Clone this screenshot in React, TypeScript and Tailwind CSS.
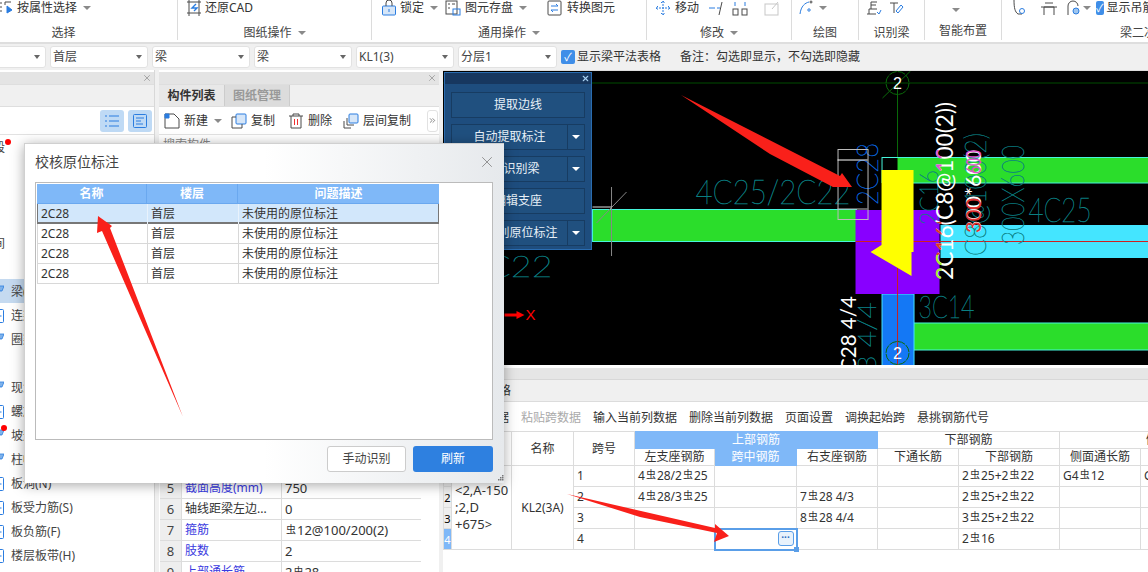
import type { ReactNode } from "react";
import { ChevronsRight, X } from "lucide-react";

const Caret = ({ className = "" }: { className?: string }) => (
  <span className={`inline-block w-0 h-0 border-x-[4px] border-x-transparent border-t-[4px] border-t-[#8a8a8a] ${className}`} />
);

const Glyph = ({ children, className = "" }: { children: ReactNode; className?: string }) => (
  <svg viewBox="0 0 16 16" className={`w-4 h-4 shrink-0 ${className}`} fill="none" stroke="#4a4a4a" strokeWidth="1">
    {children}
  </svg>
);

// 钢筋符号
const Bar = () => <span className="text-[10px] relative -top-[2px] mx-[1px]">虫</span>;

function RibbonGroup({ width, label, caret, children, labelClass = "" }: { width: string; label: string; caret?: boolean; children?: ReactNode; labelClass?: string }) {
  return (
    <div className={`${width} shrink-0 h-[40px] flex flex-col border-r border-[#dcdcdc]`}>
      <div className="h-[15px] flex items-center whitespace-nowrap leading-[15px]">{children}</div>
      <div className={`mt-[9px] flex items-center justify-center gap-[6px] text-[#444] ${labelClass}`}>
        <span>{label}</span>
        {caret && <Caret />}
      </div>
    </div>
  );
}

function Ribbon() {
  return (
    <div className="h-[44px] bg-white border-b-2 border-[#dedede] flex overflow-hidden text-[12px] text-[#333]">
      <RibbonGroup width="w-[178px]" label="选择" labelClass="pr-[50px]">
        <Glyph className="-ml-[2px]"><path d="M1 3h3M1 7h3M1 11h3" /><path d="M7 2h6M7 2v3" /><path d="M9 6v7l5-3z" fill="#2b7de0" stroke="#2b7de0" /></Glyph>
        <span className="ml-[3px]">按属性选择</span>
        <Caret className="ml-[6px]" />
      </RibbonGroup>
      <RibbonGroup width="w-[194px]" label="图纸操作" caret>
        <Glyph className="ml-[8px]"><path d="M1 2h14M1 13h14M3 0v16M13 0v16" /><path d="M10 4 6 8h5l-3 3" stroke="#2b7de0" strokeWidth="1.4" /></Glyph>
        <span className="ml-[3px]">还原CAD</span>
      </RibbonGroup>
      <RibbonGroup width="w-[275px]" label="通用操作" caret>
        <Glyph className="ml-[9px]"><rect x="1.5" y="6" width="13" height="9" rx="1" fill="#d6e6f8" stroke="#2b7de0" /><path d="M5 6V3a3 3 0 0 1 6 0v3" /><path d="M8 9v3" stroke="#2b7de0" /></Glyph>
        <span className="ml-[3px]">锁定</span>
        <Caret className="ml-[6px]" />
        <Glyph className="ml-[7px]"><rect x="1" y="1" width="11" height="13" /><path d="M3 4h2M7 4h3M3 8h2" /><rect x="8" y="9" width="7" height="6" stroke="#2b7de0" /></Glyph>
        <span className="ml-[4px]">图元存盘</span>
        <Caret className="ml-[6px]" />
        <Glyph className="ml-[20px]"><rect x="1" y="1" width="13" height="14" rx="1" /><path d="M4 6h7M11 6 9 4M11 10H4M4 10l2 2" stroke="#2b7de0" /></Glyph>
        <span className="ml-[4px]">转换图元</span>
      </RibbonGroup>
      <RibbonGroup width="w-[145px]" label="修改" caret>
        <Glyph className="ml-[8px]"><path d="M8 1v14M1 8h14M6 3l2-2 2 2M6 13l2 2 2-2M3 6 1 8l2 2M13 6l2 2-2 2" stroke="#2b7de0" strokeDasharray="2 1" /></Glyph>
        <span className="ml-[4px]">移动</span>
        <Glyph className="ml-[10px]"><path d="M0 8h6M8 8h3" stroke="#2b7de0" /><path d="M13 2l-3 13" /></Glyph>
        <Glyph className="ml-[7px]"><rect x="1" y="9" width="5" height="6" /><rect x="10" y="9" width="5" height="6" /><path d="M3 2v4M13 2v4" stroke="#2b7de0" /></Glyph>
        <Glyph className="ml-[16px] opacity-30"><rect x="1" y="4" width="13" height="11" /><path d="M8 9l6-7" /></Glyph>
      </RibbonGroup>
      <RibbonGroup width="w-[67px]" label="绘图">
        <Glyph className="ml-[6px]"><path d="M2 14C3 6 7 3 11 2" stroke="#2b7de0" /><circle cx="13" cy="2" r="1" /><circle cx="11" cy="10" r="1.2" stroke="#2b7de0" /></Glyph>
        <Caret className="ml-[5px]" />
      </RibbonGroup>
      <RibbonGroup width="w-[66px]" label="识别梁">
        <Glyph className="ml-[7px]"><path d="M1 14h9M3 14V9h8M5 2h6M5 5h5M5 2v7" /><path d="M11 12l2 2 2-4" stroke="#2b7de0" /></Glyph>
        <Glyph className="ml-[7px]"><path d="M1 3h8M5 3v10" /><path d="M9 13l5-6-2-2-5 6z" stroke="#2b7de0" /></Glyph>
      </RibbonGroup>
      <RibbonGroup width="w-[77px]" label="智能布置">
        <Caret className="ml-[27px] mt-[6px]" />
      </RibbonGroup>
      <div className="flex-1 h-[40px] flex flex-col overflow-hidden">
        <div className="h-[15px] flex items-center whitespace-nowrap leading-[15px]">
          <Glyph className="ml-[9px]"><path d="M3 0c0 8 1 12 4 14h4" /><circle cx="11" cy="11" r="2.5" stroke="#2b7de0" /></Glyph>
          <Glyph className="ml-[14px]"><path d="M0 7h16M3 15V7h10v8M4 3h8" /></Glyph>
          <Glyph className="ml-[8px]"><path d="M3 15V6a5 5 0 0 1 10 0" /><circle cx="11" cy="11" r="3" fill="#9fc6ef" stroke="#2b7de0" /></Glyph>
          <Caret className="ml-[2px]" />
          <span className="ml-[5px] w-[14px] h-[14px] rounded-[2px] bg-[#3f8ee8] text-white text-[11px] leading-[14px] text-center">✓</span>
          <span className="ml-[3px]">显示吊筋</span>
        </div>
        <div className="mt-[9px] pl-[118px] text-[#444] whitespace-nowrap">梁二次</div>
      </div>
    </div>
  );
}

function Select({ width, value }: { width: string; value: string }) {
  return (
    <div className={`${width} h-[22px] shrink-0 bg-white rounded-[3px] border border-[#e2e2e2] flex items-center justify-between px-[2px] text-[#444]`}>
      <span>{value}</span>
      <span className="inline-block mr-[3px] w-0 h-0 border-x-[3px] border-x-transparent border-t-[4px] border-t-[#666]" />
    </div>
  );
}

function FilterBar() {
  return (
    <div className="h-[26px] flex items-center gap-[4px] text-[12px] bg-[#f0f0f0] -ml-[52px]">
      <Select width="w-[98px]" value="" />
      <Select width="w-[98px]" value="首层" />
      <Select width="w-[98px]" value="梁" />
      <Select width="w-[98px]" value="梁" />
      <Select width="w-[98px]" value="KL1(3)" />
      <Select width="w-[99px]" value="分层1" />
      <span className="w-[14px] h-[14px] rounded-[2px] bg-[#3f8ee8] text-white text-[11px] leading-[14px] text-center">✓</span>
      <span className="-ml-[2px] text-[#333]">显示梁平法表格</span>
      <span className="ml-[15px] text-[#333]">备注：勾选即显示，不勾选即隐藏</span>
    </div>
  );
}

type NavRow = { y: string; kind?: "clip" | "beam" | "box"; active?: boolean; dot?: "first" | "second" };

const navRows: NavRow[] = [
  { y: "段", kind: "clip", dot: "first" },
  { y: "" },
  { y: "" },
  { y: "" },
  { y: "间", kind: "clip" },
  { y: "" },
  { y: "梁(L)", kind: "beam", active: true },
  { y: "连梁(G)", kind: "box" },
  { y: "圈梁(E)", kind: "beam" },
  { y: "" },
  { y: "现浇板(B)", kind: "beam" },
  { y: "螺旋板(B)", kind: "box" },
  { y: "坡道(B)", kind: "beam", dot: "second" },
  { y: "柱帽(V)", kind: "beam" },
  { y: "板洞(N)", kind: "box" },
  { y: "板受力筋(S)", kind: "box" },
  { y: "板负筋(F)", kind: "box" },
  { y: "楼层板带(H)", kind: "box" },
];

function NavPanel() {
  return (
    <div className="w-[155px] shrink-0 bg-white border-r border-[#d8d8d8] flex flex-col text-[12px]">
      <div className="h-[12px] bg-[#e4e4e4] flex items-center justify-end pr-[2px] mt-[2px]">
        <X size={10} color="#999" />
      </div>
      <div className="h-[23px] bg-[#f0f0f0] border-y border-[#dedede]" />
      <div className="h-[28px] flex items-center justify-end gap-[4px] pr-[2px] border-b border-[#e2e2e2]">
        <span className="w-[24px] h-[22px] rounded-[3px] bg-[#bfdaf5] flex items-center justify-center">
          <svg viewBox="0 0 16 16" className="w-4 h-4" stroke="#2b7de0" fill="none"><path d="M1 3h2M1 8h2M1 13h2M5 3h10M5 8h10M5 13h10" /></svg>
        </span>
        <span className="w-[24px] h-[22px] rounded-[3px] bg-[#bfdaf5] flex items-center justify-center">
          <svg viewBox="0 0 16 16" className="w-4 h-4" stroke="#2b7de0" fill="none"><rect x="1.5" y="1.5" width="13" height="13" rx="1" /><path d="M4 5h8M4 8h5M4 11h7" /></svg>
        </span>
      </div>
      <div className="flex flex-col">
        {navRows.map((r, i) => (
          <div key={i} className={`h-[24px] shrink-0 relative flex items-center text-[#444] whitespace-nowrap pt-[1px] ${r.active ? "bg-[#c5daf0]" : ""}`}>
            {r.kind === "box" && (
              <svg viewBox="0 0 4 14" className="w-[4px] h-[14px] shrink-0" fill="none" stroke="#2b7de0"><path d="M-2 .5h4.5a1 1 0 0 1 1 1v11a1 1 0 0 1-1 1H-2" /><path d="M0 7h1.5" /></svg>
            )}
            {r.kind === "beam" && (
              <svg viewBox="0 0 4 14" className="w-[4px] h-[14px] shrink-0 mb-[4px]" fill="#7fb2ea" stroke="#2b7de0" strokeWidth=".8"><path d="M-2 3h6L2 8H0z" /></svg>
            )}
            {r.kind === "clip" ? <span className="-ml-[7px]">{r.y}</span> : <span className={r.kind ? "ml-[7px]" : ""}>{r.y}</span>}
            {r.dot === "first" && <span className="absolute left-[5px] top-[4px] w-[6px] h-[6px] rounded-full bg-[#f00]" />}
            {r.dot === "second" && <span className="absolute left-[1px] top-[2px] w-[6px] h-[6px] rounded-full bg-[#f00]" />}
          </div>
        ))}
      </div>
    </div>
  );
}

const props = [
  { n: 5, name: "截面高度(mm)", value: "750", blue: true },
  { n: 6, name: "轴线距梁左边...", value: "0" },
  { n: 7, name: "箍筋", value: <><Bar />12@100/200(2)</>, blue: true },
  { n: 8, name: "肢数", value: "2", blue: true },
  { n: 9, name: "上部通长筋", value: <>2<Bar />28</>, blue: true },
];

function ListPanel() {
  return (
    <div className="w-[280px] shrink-0 ml-[4px] bg-white flex flex-col text-[12px] text-[#333]">
      <div className="h-[12px] shrink-0 bg-[#e4e4e4] flex items-center justify-end pr-[2px] mt-[2px]">
        <X size={10} color="#999" />
      </div>
      <div className="h-[23px] shrink-0 bg-[#f0f0f0] border-y border-[#dedede] flex">
        <span className="w-[65px] bg-[#e8e8e8] font-bold flex items-center justify-center text-[#333]">构件列表</span>
        <span className="w-[66px] bg-[#dcdcdc] border-x border-[#ccc] font-bold flex items-center justify-center text-[#999]">图纸管理</span>
      </div>
      <div className="h-[28px] shrink-0 flex items-center border-b border-[#e2e2e2] whitespace-nowrap">
        <Glyph className="ml-[5px]"><path d="M1 1h9l5 5v9H1z" /><path d="M1 1h4v4H1z" fill="#2b7de0" stroke="#2b7de0" /></Glyph>
        <span className="ml-[4px]">新建</span>
        <Caret className="ml-[6px]" />
        <Glyph className="ml-[9px]"><rect x="5" y="1" width="10" height="10" rx="1" fill="#d6e6f8" stroke="#2b7de0" /><path d="M5 4H1v11h10v-4" /></Glyph>
        <span className="ml-[4px]">复制</span>
        <Glyph className="ml-[13px]"><path d="M1 3h14M5 3V1h6v2M3 3v12h10V3" /><path d="M6.5 6v6M9.5 6v6" stroke="#f03030" /></Glyph>
        <span className="ml-[4px]">删除</span>
        <Glyph className="ml-[11px]"><rect x="6" y="1" width="9" height="9" rx="1" fill="#d6e6f8" stroke="#2b7de0" /><path d="M4 5v7h7M1 8v7h7" /></Glyph>
        <span className="ml-[4px]">层间复制</span>
        <span className="ml-[16px] w-[11px] h-[22px] rounded-[3px] border border-[#e2e2e2] flex items-center justify-center">
          <ChevronsRight size={9} color="#666" />
        </span>
      </div>
      <div className="h-[20px] shrink-0 pl-[4px] text-[#888] border-b border-[#e2e2e2] flex items-center">搜索构件...</div>
      <div className="h-[323px] shrink-0" />
      <div className="flex flex-col shrink-0 ml-px">
        {props.map((p) => (
          <div key={p.n} className="h-[21px] shrink-0 flex border-b border-[#dcdcdc] w-[261px] text-[13px]">
            <span className="w-[21px] bg-[#eee] text-center text-[#444] leading-[20px]">{p.n}</span>
            <span className={`w-[101px] border-x border-[#dcdcdc] pl-[3px] text-[12px] leading-[20px] whitespace-nowrap overflow-hidden ${p.blue ? "text-[#3a3ae0]" : "text-[#333]"}`}>{p.name}</span>
            <span className="flex-1 pl-[3px] leading-[20px]">{p.value}</span>
          </div>
        ))}
      </div>
    </div>
  );
}

const thin = "'Lato','Inter',sans-serif";

function CadText({ x, y, w, size = 34, rotate, fill = "#0a7f82", weight = 100, clip, children }: { x: number; y: number; w: number; size?: number; rotate?: boolean; fill?: string; weight?: number; clip?: string; children: ReactNode }) {
  const text = (
    <text
      transform={`translate(${x} ${y})${rotate ? " rotate(-90)" : ""}`}
      textLength={w}
      lengthAdjust="spacingAndGlyphs"
      fontSize={size}
      fontFamily={thin}
      fontWeight={weight}
      fill={fill}
      stroke={weight === 100 ? fill : "none"}
      strokeWidth={weight === 100 ? 0.45 : 0}
    >
      {children}
    </text>
  );
  return clip ? <g clipPath={clip}>{text}</g> : text;
}

function CadView() {
  const main = "2C16(C8@100(2))";
  return (
    <div className="h-[295px] bg-black border-t border-[#ddd]">
      <svg viewBox="443 71 705 294" className="w-full h-full block">
        <defs>
          <clipPath id="lowGreen"><rect x="925" y="255" width="16" height="30" /></clipPath>
          <clipPath id="midRed"><rect x="925" y="222" width="16" height="33" /></clipPath>
          <clipPath id="upPink"><rect x="925" y="150" width="16" height="22" /></clipPath>
        </defs>
        <line x1="443" y1="83" x2="1148" y2="83" stroke="#004c00" />
        <rect x="592" y="209.5" width="264" height="32" fill="#2bdd2b" stroke="#46f5dc" />
        <line x1="611" y1="187" x2="611" y2="256" stroke="#888" />
        <line x1="596" y1="223" x2="626" y2="192" stroke="#888" />
        <line x1="592" y1="207" x2="611" y2="207" stroke="#ddd" />
        <CadText x={695} y={204} w={155}>4C25/2C22</CadText>
        <CadText x={465} y={277} w={87} size={30}>2C22</CadText>
        <line x1="504" y1="315" x2="518" y2="315" stroke="#f00" strokeWidth="3" />
        <polygon points="516,311 524,315 516,319" fill="#f00" />
        <text x="525" y="320" fontSize="15" fontFamily="'Liberation Sans',sans-serif" fill="#f00">X</text>

        <line x1="897" y1="83" x2="897" y2="157" stroke="#0a6a0a" />
        <rect x="881.5" y="157.5" width="270" height="25" fill="#000" stroke="#46f5dc" />
        <rect x="897" y="158" width="251" height="25" fill="#2bdd2b" />
        <line x1="897" y1="183" x2="1148" y2="183" stroke="#46f5dc" />
        <rect x="940" y="225" width="208" height="33" fill="#44e5ff" />
        <rect x="913" y="323" width="235" height="27" fill="#2bdd2b" stroke="#46f5dc" />
        <rect x="881.5" y="294" width="32" height="72" fill="#1478f5" stroke="#46e5ff" />
        <rect x="855" y="210" width="84" height="84" fill="#8800ff" />
        <line x1="855" y1="241.5" x2="1148" y2="241.5" stroke="#d02020" />
        <line x1="897" y1="210" x2="897" y2="365" stroke="#c82020" />
        <polygon points="881,170 913,170 913,252 911,252 911,276 870,252 881,245" fill="#ffff00" />

        <CadText x={1028} y={222} w={63}>4C25</CadText>
        <CadText x={918} y={318} w={56} size={32}>3C14</CadText>
        <CadText x={1023} y={245} w={100} size={32} rotate>300X600</CadText>
        <CadText x={985} y={256} w={123} size={30} rotate>C8@100(2)</CadText>
        <CadText x={937} y={225} w={55} size={26} rotate>2C16</CadText>
        <CadText x={952} y={280} w={178} size={24} rotate fill="#fff" weight={400}>{main}</CadText>
        <CadText x={952} y={280} w={178} size={24} rotate fill="#9df02a" weight={400} clip="url(#lowGreen)">{main}</CadText>
        <CadText x={952} y={280} w={178} size={24} rotate fill="#e03020" weight={400} clip="url(#midRed)">{main}</CadText>
        <CadText x={952} y={280} w={178} size={24} rotate fill="#e050d0" weight={400} clip="url(#upPink)">{main}</CadText>
        <CadText x={980} y={233} w={83} size={22} rotate fill="#fff" weight={400}>300*600</CadText>
        <CadText x={980} y={233} w={35} size={22} rotate fill="#e03030" weight={400}>300</CadText>
        <CadText x={980} y={174} w={24} size={22} rotate fill="#e050d0" weight={400}>600</CadText>
        <CadText x={877} y={205} w={62} size={30} rotate fill="#0a6ae0">2C28</CadText>
        <rect x="837.5" y="149.5" width="30" height="70" fill="none" stroke="#bbb" />
        <line x1="837" y1="160" x2="867" y2="160" stroke="#fff" />
        <line x1="837" y1="209" x2="867" y2="209" stroke="#bbb" />
        <CadText x={855} y={372} w={76} size={22} rotate fill="#fff" weight={400}>C28 4/4</CadText>
        <CadText x={875} y={372} w={70} size={26} rotate>3 4/4</CadText>

        <g stroke="#0a6a0a" fill="none">
          <circle cx="897" cy="83" r="11.5" strokeDasharray="8 1" />
          <line x1="882" y1="98" x2="910" y2="71" />
          <circle cx="897" cy="353" r="11.5" strokeDasharray="8 1" />
        </g>
        <text x="897" y="88.5" textAnchor="middle" fontSize="16" fontFamily="'Liberation Sans',sans-serif" fill="#fff">2</text>
        <text x="897" y="358.5" textAnchor="middle" fontSize="16" fontFamily="'Liberation Sans',sans-serif" fill="#fff">2</text>
      </svg>
    </div>
  );
}

const thBase = "border border-[#dcdcdc] font-normal text-center text-[#333] leading-[16px] overflow-hidden whitespace-nowrap";
const tdBase = "border border-[#dcdcdc] px-[3px] text-[#333] leading-[18px] whitespace-nowrap overflow-hidden";

type Row = { left?: ReactNode; right?: ReactNode; low: ReactNode; side?: ReactNode };
const spanRows: Row[] = [
  { left: <>4<Bar />28/2<Bar />25</>, low: <>2<Bar />25+2<Bar />22</>, side: <>G4<Bar />12</> },
  { left: <>4<Bar />28/3<Bar />25</>, right: <>7<Bar />28 4/3</>, low: <>2<Bar />25+2<Bar />22</> },
  { right: <>8<Bar />28 4/4</>, low: <>3<Bar />25+2<Bar />22</> },
  { low: <>2<Bar />16</> },
];

function BeamTable() {
  return (
    <div className="flex-1 bg-white text-[12px] overflow-hidden">
      <div className="h-[3px] bg-white" />
      <div className="h-[12px] bg-[#e6e6e6] border-b border-[#d8d8d8]" />
      <div className="h-[22px] bg-[#f0f0f0] border-b border-[#dcdcdc] pl-[8px] flex items-center text-[#333]">梁平法表格</div>
      <div className="h-[29px] flex items-center gap-[12px] pl-[6px] pt-[2px] text-[#333] whitespace-nowrap">
        <span>复制跨数据</span>
        <span className="text-[#aaa]">粘贴跨数据</span>
        <span>输入当前列数据</span>
        <span>删除当前列数据</span>
        <span>页面设置</span>
        <span>调换起始跨</span>
        <span>悬挑钢筋代号</span>
      </div>
      <table className="table-fixed border-collapse w-[705px]">
        <colgroup>
          <col className="w-[8px]" />
          <col className="w-[60px]" />
          <col className="w-[62px]" />
          <col className="w-[61px]" />
          <col className="w-[80px]" />
          <col className="w-[82px]" />
          <col className="w-[81px]" />
          <col className="w-[81px]" />
          <col className="w-[101px]" />
          <col className="w-[81px]" />
          <col className="w-[8px]" />
        </colgroup>
        <thead>
          <tr className="h-[17px]">
            <th rowSpan={2} className={thBase} />
            <th rowSpan={2} className={thBase} />
            <th rowSpan={2} className={thBase}>名称</th>
            <th rowSpan={2} className={thBase}>跨号</th>
            <th colSpan={3} className="border border-[#7fb8f8] bg-[#7fb8f8] font-normal leading-[16px] text-white text-center">上部钢筋</th>
            <th colSpan={2} className={thBase}>下部钢筋</th>
            <th colSpan={2} className={`${thBase} !text-left pl-[86px] max-w-[89px]`}>侧面钢筋</th>
          </tr>
          <tr className="h-[17px]">
            <th className={thBase}>左支座钢筋</th>
            <th className="border border-[#7fb8f8] bg-[#7fb8f8] font-normal leading-[16px] text-white text-center">跨中钢筋</th>
            <th className={thBase}>右支座钢筋</th>
            <th className={thBase}>下通长筋</th>
            <th className={thBase}>下部钢筋</th>
            <th className={thBase}>侧面通长筋</th>
            <th className={thBase} />
          </tr>
        </thead>
        <tbody>
          {spanRows.map((r, i) => (
            <tr key={i} className="h-[21px]">
              <td className={`border border-[#dcdcdc] text-[11px] text-center leading-none overflow-hidden ${i === 3 ? "bg-[#7fb8f8] text-white" : "bg-[#eee]"}`}>{i + 1}</td>
              {i === 0 && (
                <td rowSpan={4} className="border border-[#dcdcdc] pl-[3px] text-[13px] leading-[17px] text-[#333] align-middle whitespace-nowrap overflow-hidden">
                  {"<2,A-150"}<br />;2,D<br />+675{">"}
                </td>
              )}
              {i === 0 && <td rowSpan={4} className="border border-[#dcdcdc] text-center text-[#333]">KL2(3A)</td>}
              <td className={tdBase}>{i + 1}</td>
              <td className={tdBase}>{r.left}</td>
              {i === 3 ? (
                <td className="border-2 border-[#5a9ee8] relative">
                  <span className="absolute right-[2px] top-[1px] w-[16px] h-[15px] rounded-[3px] border border-[#5a9ee8] bg-[#e8f2fc] text-[#2b6cc0] text-[10px] leading-[11px] text-center font-bold">···</span>
                  <span className="absolute -right-[3px] -bottom-[3px] w-[5px] h-[5px] bg-[#5a9ee8]" />
                </td>
              ) : (
                <td className={tdBase} />
              )}
              <td className={tdBase}>{r.right}</td>
              <td className={tdBase} />
              <td className={tdBase}>{r.low}</td>
              <td className={tdBase}>{r.side}</td>
              <td className={tdBase}>{i === 0 ? "G" : ""}</td>
            </tr>
          ))}
        </tbody>
      </table>
    </div>
  );
}

function FloatingTools() {
  const items = [
    { t: "提取边线" },
    { t: "自动提取标注", more: true },
    { t: "点选识别梁", more: true },
    { t: "编辑支座" },
    { t: "点选识别原位标注", more: true },
  ];
  return (
    <div className="absolute left-[444px] top-[72px] w-[148px] h-[178px] bg-[#1e4d7e] border border-[#2a6cb0] flex flex-col text-[12px] text-[#e8f0f8]">
      <div className="h-[11px] bg-[#17375f] flex items-center justify-end pr-[1px]">
        <X size={9} color="#a8d0f0" strokeWidth={3} />
      </div>
      <div className="flex flex-col gap-[6px] px-[6px] pt-[8px]">
        {items.map((b) => (
          <div key={b.t} className="h-[26px] flex">
            <span className="flex-1 bg-[#20507f] border border-[#173c62] flex items-center justify-center whitespace-nowrap">{b.t}</span>
            {b.more && (
              <span className="w-[17px] bg-[#20507f] border border-l-0 border-[#173c62] flex items-center justify-center">
                <span className="w-0 h-0 border-x-[4px] border-x-transparent border-t-[4px] border-t-white" />
              </span>
            )}
          </div>
        ))}
      </div>
    </div>
  );
}

const checks = ["未使用的原位标注", "未使用的原位标注", "未使用的原位标注", "未使用的原位标注"];

function CheckDialog() {
  return (
    <div className="absolute left-[24px] top-[143px] w-[480px] h-[340px] bg-gradient-to-r from-[#ffffff] via-[#ffffff] to-[#e6e9ec] border-t border-l border-[#d0d0d0] shadow-[0_2px_12px_rgba(0,0,0,0.35)] flex flex-col text-[12px] text-[#333]">
      <div className="h-[38px] shrink-0 flex items-center justify-between pl-[10px] pr-[8px] pb-[3px]">
        <span className="text-[14px] text-[#444]">校核原位标注</span>
        <X size={18} color="#8a8a8a" strokeWidth={1.2} />
      </div>
      <div className="w-[458px] h-[258px] shrink-0 ml-[10px] bg-white border border-[#bbb] pl-[1px] pt-[1px]">
        <div className="w-[402px]">
          <div className="grid grid-cols-[110px_91px_201px] h-[20px] bg-[#7fb8f8] text-white font-bold leading-[19px] text-center border-b border-[#6aa8ef]">
            <span className="border-r border-[#6aa8ef]">名称</span>
            <span className="border-r border-[#6aa8ef]">楼层</span>
            <span>问题描述</span>
          </div>
          {checks.map((c, i) => (
            <div key={i} className={`grid grid-cols-[110px_91px_201px] h-[20px] leading-[20px] ${i === 0 ? "bg-[#d2e7fb] border-b-2 border-x border-[#777]" : "border-b border-x border-[#d8d8d8]"}`}>
              <span className={`pl-[3px] ${i === 0 ? "border-r border-[#e8f2fc]" : "border-r border-[#d8d8d8]"}`}>2C28</span>
              <span className={`pl-[3px] ${i === 0 ? "border-r border-[#e8f2fc]" : "border-r border-[#d8d8d8]"}`}>首层</span>
              <span className="pl-[3px]">{c}</span>
            </div>
          ))}
        </div>
      </div>
      <div className="flex justify-end gap-[7px] mt-[6px] pr-[11px]">
        <span className="w-[79px] h-[26px] rounded-[3px] bg-white border border-[#ccc] flex items-center justify-center text-[#444]">手动识别</span>
        <span className="w-[80px] h-[26px] rounded-[3px] bg-[#2e80e0] flex items-center justify-center text-white">刷新</span>
      </div>
      <svg viewBox="0 0 7 7" className="absolute right-0 bottom-[2px] w-[7px] h-[7px]" fill="#777">
        <rect x="5" y="1" width="1.5" height="1.5" /><rect x="3" y="3" width="1.5" height="1.5" /><rect x="5" y="3" width="1.5" height="1.5" />
        <rect x="1" y="5" width="1.5" height="1.5" /><rect x="3" y="5" width="1.5" height="1.5" /><rect x="5" y="5" width="1.5" height="1.5" />
      </svg>
    </div>
  );
}

// 截图上手工标注的红箭头
function Arrows() {
  return (
    <svg viewBox="0 0 1148 572" className="absolute inset-0 w-[1148px] h-[572px] pointer-events-none" fill="#f9201a">
      <polygon points="681,95 840,176 842,173 852,187 833,187 770,154" />
      <polygon points="183,417 110,228 112,226 98,216 97,233 102,231" />
      <polygon points="567,494 715,528 715,524 729,536 714,542 717,533 640,517" />
    </svg>
  );
}

export default function App() {
  return (
    <div className="relative w-[1148px] h-[572px] overflow-hidden bg-[#f0f0f0] font-['Noto_Sans','Noto_Sans_CJK_SC',sans-serif]">
      <Ribbon />
      <FilterBar />
      <div className="flex h-[502px]">
        <NavPanel />
        <ListPanel />
        <div className="w-[709px] ml-[4px] flex flex-col">
          <CadView />
          <BeamTable />
        </div>
      </div>
      <FloatingTools />
      <CheckDialog />
      <Arrows />
    </div>
  );
}
